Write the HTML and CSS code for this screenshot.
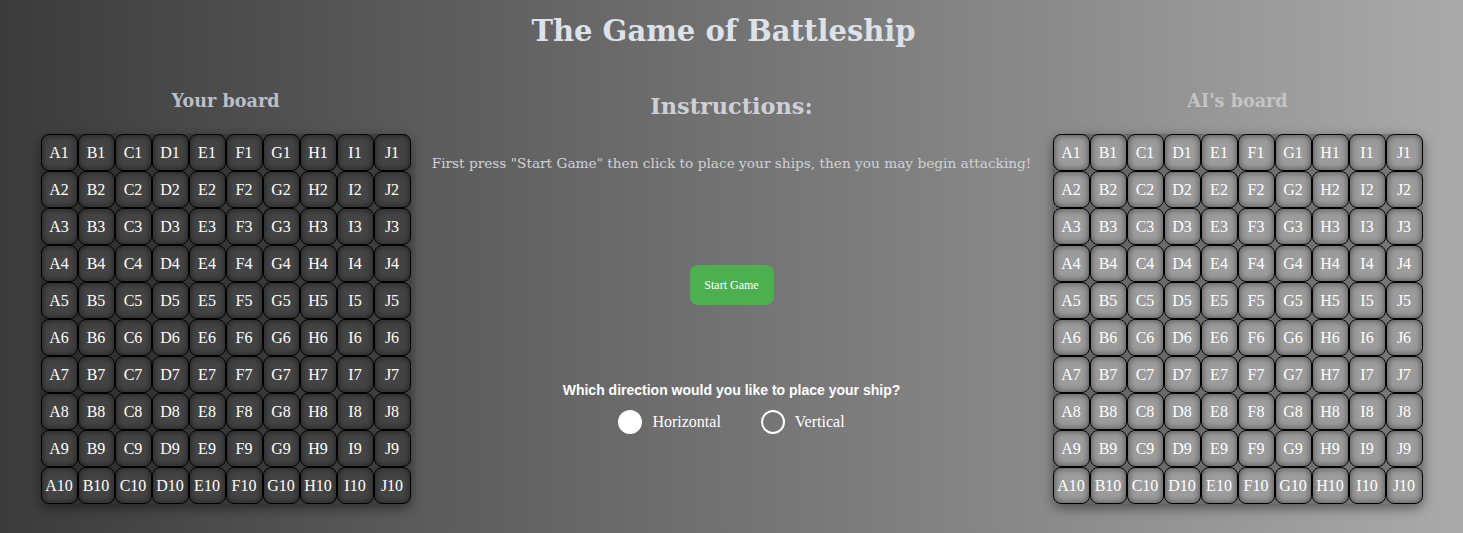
FILE: index.html
```html
<!DOCTYPE html>
<html>
<head>
<meta charset="utf-8">
<title>Battleship</title>
<link rel="stylesheet" href="styles.css">
</head>
<body>
<h1 class="title">The Game of Battleship</h1>
<div class="main">
  <section class="side">
    <h2 class="board-title">Your board</h2>
    <div class="board" id="player"></div>
  </section>
  <section class="center">
    <h2 class="instr-title">Instructions:</h2>
    <p class="instr">First press "Start Game" then click to place your ships, then you may begin attacking!</p>
    <button class="start">Start Game</button>
    <div class="direction">
      <p class="question">Which direction would you like to place your ship?</p>
      <div class="options">
        <label class="opt"><span class="radio checked"></span>Horizontal</label>
        <label class="opt"><span class="radio"></span>Vertical</label>
      </div>
    </div>
  </section>
  <section class="side">
    <h2 class="board-title ai">AI's board</h2>
    <div class="board ai-board" id="ai"></div>
  </section>
</div>
<script>
  var cols = "ABCDEFGHIJ";
  ["player","ai"].forEach(function(id){
    var b = document.getElementById(id);
    var html = "";
    for (var r = 1; r <= 10; r++) {
      for (var c = 0; c < 10; c++) {
        html += '<div class="cell">' + cols[c] + r + '</div>';
      }
    }
    b.innerHTML = html;
  });
</script>
</body>
</html>
```
FILE: styles.css
```css
html, body {
  margin: 0;
  padding: 0;
}
body {
  width: 1463px;
  height: 533px;
  overflow: hidden;
  background: linear-gradient(to right, #3b3b3b, #aaaaaa);
  font-family: "DejaVu Serif", Georgia, serif;
}
.title {
  margin: 0;
  padding: 12px 16px 0 0;
  text-align: center;
  font-size: 29px;
  line-height: 38px;
  color: #dde1e8;
  font-weight: bold;
}
.main {
  display: flex;
  justify-content: space-between;
  padding: 0 41px;
}
.side {
  width: 369px;
  display: flex;
  flex-direction: column;
  align-items: center;
}
.board-title {
  margin: 0;
  padding-top: 40px;
  height: 44px;
  font-size: 17.6px;
  line-height: 22px;
  color: #b9bfc8;
}
.board-title.ai {
  color: #c4c4c4;
}
.board {
  display: grid;
  grid-template-columns: repeat(10, 37px);
  grid-auto-rows: 37px;
  background: rgba(0, 0, 0, 0.28);
  border-radius: 8px;
  box-shadow: 0 4px 12px rgba(0, 0, 0, 0.45);
}
.cell {
  box-sizing: border-box;
  border: 1px solid #000;
  border-radius: 8px;
  background: #444;
  box-shadow: inset 0 0 7px rgba(0, 0, 0, 0.55);
  display: flex;
  align-items: center;
  justify-content: center;
  font-family: "Liberation Serif", "Times New Roman", serif;
  font-size: 16px;
  color: #fff;
}
.ai-board .cell {
  background: #9c9c9c;
}
.center {
  flex: 1;
  display: flex;
  flex-direction: column;
  align-items: center;
}
.instr-title {
  margin: 0;
  padding-top: 42px;
  font-size: 22.4px;
  line-height: 28px;
  color: #cdd0d5;
}
.instr {
  margin: 34px 0 0;
  font-size: 13.7px;
  line-height: 18px;
  color: #cfd2d6;
  white-space: nowrap;
}
.start {
  margin-top: 93px;
  width: 84px;
  height: 40px;
  border: none;
  border-radius: 8px;
  background: #4caf50;
  color: #fff;
  font-family: "Liberation Serif", "Times New Roman", serif;
  font-size: 12px;
  padding: 0;
}
.direction {
  margin-top: 76px;
  display: flex;
  flex-direction: column;
  align-items: center;
}
.question {
  margin: 0;
  font-family: "Liberation Sans", Arial, sans-serif;
  font-weight: bold;
  font-size: 14px;
  line-height: 18px;
  color: #fff;
}
.options {
  display: flex;
  gap: 40px;
  margin-top: 11px;
}
.opt {
  display: flex;
  align-items: center;
  gap: 10px;
  font-family: "Liberation Serif", "Times New Roman", serif;
  font-size: 16px;
  color: #fff;
}
.radio {
  box-sizing: border-box;
  width: 24px;
  height: 24px;
  border-radius: 50%;
  border: 2px solid #fff;
}
.radio.checked {
  background: #fff;
}
```
